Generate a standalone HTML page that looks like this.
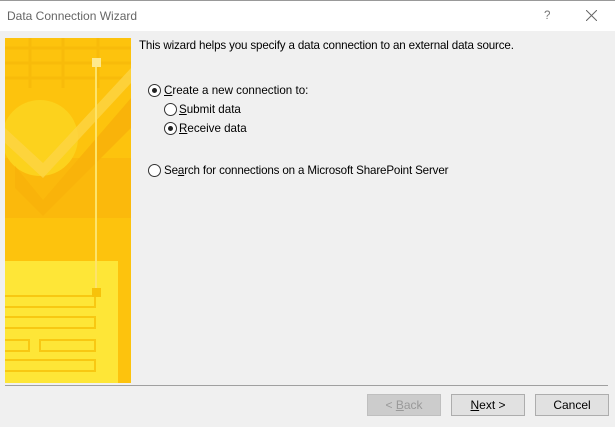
<!DOCTYPE html>
<html><head><style>
body{margin:0;width:615px;height:427px;background:#f0f0f0;font-family:"Liberation Sans",sans-serif;font-size:11.6px;color:#000;position:relative;overflow:hidden}
.t{position:absolute;left:0;top:0;width:615px;height:31px;background:#fff;border-top:1px solid #999;box-sizing:border-box}
.t span{position:absolute;left:7px;top:8px;color:#666;font-size:12px}
.a{position:absolute;white-space:nowrap}
.r{position:absolute;width:11px;height:11px;border:1px solid #333;border-radius:50%;background:#fff}
.r.on::after{content:"";position:absolute;left:3px;top:3px;width:5px;height:5px;border-radius:50%;background:#222}
.b{position:absolute;top:394px;width:72px;height:20px;border:1px solid #adadad;background:#e1e1e1;text-align:center;line-height:20px;font-size:12px}
u{text-decoration:underline}
</style></head><body>
<div class="t"><span>Data Connection Wizard</span>
<div class="a" style="left:544px;top:8px;color:#777">?</div>
<svg style="position:absolute;left:586px;top:9px" width="11" height="11"><path d="M0 0L11 11M11 0L0 11" stroke="#666" stroke-width="1"/></svg></div>
<svg style="position:absolute;left:5px;top:38px" width="126" height="345">
<rect width="126" height="345" fill="#fdc30d"/>
<g stroke="#f7b80a" stroke-width="3" opacity=".7"><line x1="0" y1="10" x2="126" y2="10"/><line x1="0" y1="25" x2="126" y2="25"/><line x1="0" y1="40" x2="126" y2="40"/><line x1="25" y1="0" x2="25" y2="50"/><line x1="58" y1="0" x2="58" y2="50"/><line x1="93" y1="0" x2="93" y2="50"/></g>
<rect x="0" y="120" width="126" height="60" fill="#fbb90c"/>
<circle cx="35" cy="100" r="38" fill="#fcd21d"/>
<polygon points="10,128 38,162 126,60 126,90 38,178 10,150" fill="#f9b30a"/>
<polygon points="0,90 38,125 126,30 126,45 38,140 0,105" fill="#fcd545" opacity=".8"/>
<rect x="0" y="223" width="113" height="122" fill="#fee637"/>
<g fill="none" stroke="#f8c812" stroke-width="2"><rect x="-2" y="258" width="92" height="11"/><rect x="-2" y="279" width="92" height="11"/><rect x="-2" y="302" width="26" height="11"/><rect x="35" y="302" width="55" height="11"/><rect x="-2" y="322" width="92" height="11"/></g>
<line x1="91" y1="25" x2="91" y2="255" stroke="#fde36a" stroke-width="2"/>
<rect x="87" y="20" width="9" height="9" fill="#fee98e"/>
<rect x="87" y="250" width="9" height="9" fill="#f7c20a"/>
</svg>
<div class="a" style="left:139px;top:39px;letter-spacing:-0.15px">This wizard helps you specify a data connection to an external data source.</div>
<div class="r on" style="left:148px;top:84px"></div><div class="a" style="left:164px;top:84px"><u>C</u>reate a new connection to:</div>
<div class="r" style="left:164px;top:103px"></div><div class="a" style="left:179px;top:103px"><u>S</u>ubmit data</div>
<div class="r on" style="left:164px;top:122px"></div><div class="a" style="left:179px;top:122px"><u>R</u>eceive data</div>
<div class="r" style="left:148px;top:164px"></div><div class="a" style="left:164px;top:164px;letter-spacing:-0.15px">Se<u>a</u>rch for connections on a Microsoft SharePoint Server</div>
<div style="position:absolute;left:5px;top:385px;width:603px;height:1px;background:#a0a0a0"></div>
<div class="b" style="left:367px;color:#999;background:#ccc;border-color:#bfbfbf">&lt; <u>B</u>ack</div>
<div class="b" style="left:451px"><u>N</u>ext &gt;</div>
<div class="b" style="left:535px">Cancel</div>
</body></html>
